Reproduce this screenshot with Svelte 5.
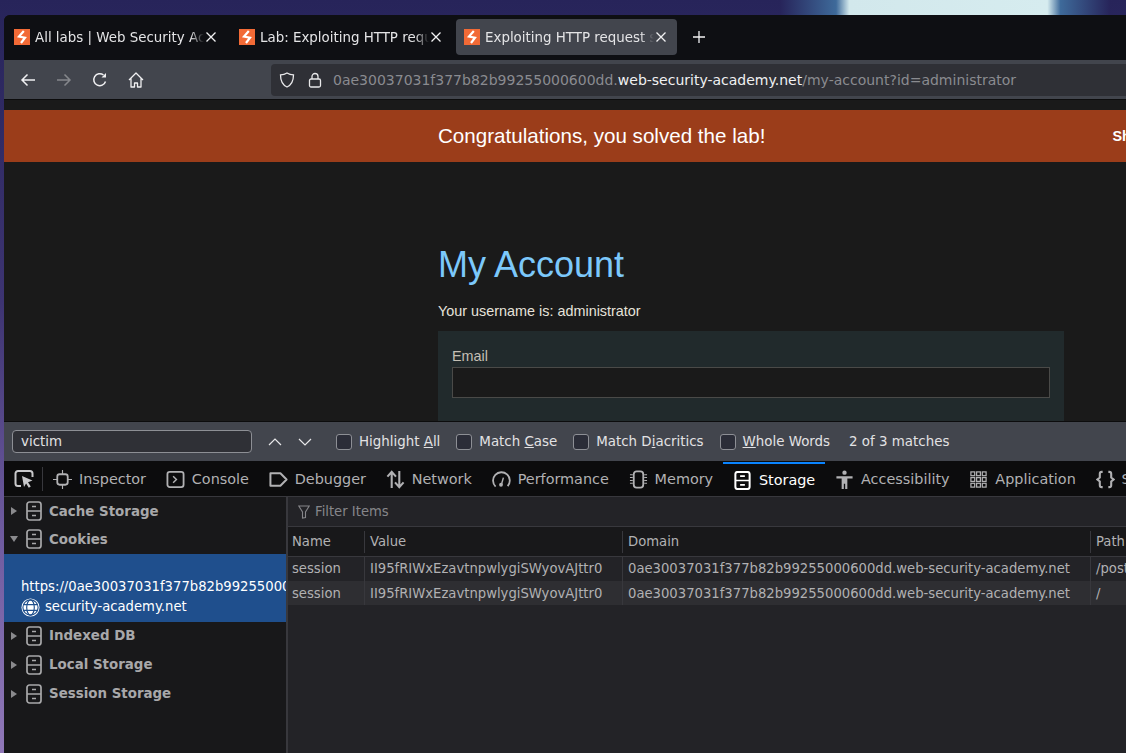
<script>
  const tabs = [
    { title: 'All labs | Web Security Academy', active: false },
    { title: 'Lab: Exploiting HTTP request smuggling', active: false },
    { title: 'Exploiting HTTP request smuggling', active: true }
  ]
  const options = [
    { before: 'Highlight ', key: 'A', after: 'll' },
    { before: 'Match ', key: 'C', after: 'ase' },
    { before: 'Match D', key: 'i', after: 'acritics' },
    { before: '', key: 'W', after: 'hole Words' }
  ]
  const tools = ['Inspector', 'Console', 'Debugger', 'Network', 'Performance', 'Memory', 'Storage', 'Accessibility', 'Application', 'Style Editor']
  const cookies = [
    { path: '/post' },
    { path: '/' }
  ]
  const value = 'II95fRIWxEzavtnpwlygiSWyovAJttr0'
  const domain = '0ae30037031f377b82b99255000600dd.web-security-academy.net'
</script>

{#snippet favicon()}
  <svg class="favicon" viewBox="0 0 16 16">
    <rect width="16" height="16" fill="#f26a36" />
    <path d="M9.800 2 5 7.500l6 1.200L7 14" fill="none" stroke="#fff" stroke-width="2.200" />
  </svg>
{/snippet}

{#snippet cabinet()}
  <svg class="ico" viewBox="0 0 16 20" fill="none" stroke="currentColor" stroke-width="1.700">
    <rect x="1" y="1" width="14" height="18" rx="2.500" />
    <path d="M1 10h14M6 5.500h4M6 14.500h4" />
  </svg>
{/snippet}

{#snippet toolIcon(name)}
  <svg class="ico tool-ico" viewBox="0 0 20 20" fill="none" stroke="currentColor" stroke-width="1.900">
    {#if name === 'Inspector'}
      <rect x="4.500" y="4.500" width="11" height="11" rx="2.500" />
      <path d="M10 0v4.500M10 15.500V20M0 10h4.500M15.500 10H20" stroke-width="1.200" />
    {:else if name === 'Console'}
      <rect x="1.500" y="2" width="17" height="16" rx="2.500" />
      <path d="m7.500 6.500 3.500 3.500-3.500 3.500" stroke-width="1.500" />
    {:else if name === 'Debugger'}
      <path d="M1.500 3.500h10.500l6.500 6.500-6.500 6.500H1.500z" stroke-linejoin="round" stroke-width="2.100" />
    {:else if name === 'Network'}
      <path d="M6 19V2M1.500 7 6 2l4.500 5M14 1v17M9.500 13l4.500 5 4.500-5" stroke-width="2.200" />
    {:else if name === 'Performance'}
      <path d="M3.800 17.500A8.800 8.800 0 1 1 16.500 17" />
      <circle cx="9.500" cy="15.500" r="2" fill="currentColor" stroke="none" />
      <path d="m10 15 2-7" stroke-width="1.500" />
    {:else if name === 'Memory'}
      <rect x="5" y="1.500" width="10" height="17" rx="3" />
      <path d="M1 5h3M1 8h3M1 11h3M1 14h3M16 5h3M16 8h3M16 11h3M16 14h3" stroke-width="1.100" />
    {:else if name === 'Storage'}
      <rect x="2.500" y="1" width="15" height="18" rx="2.500" stroke-width="2.100" />
      <path d="M2.500 10h15M7.500 5.500h5M7.500 14.500h5" stroke-width="1.800" />
    {:else if name === 'Accessibility'}
      <circle cx="10" cy="2.800" r="2.300" fill="currentColor" stroke="none" />
      <path d="M1.500 6.500h17v2.500h-5.500v11h-2.300v-5.500H9.300V20H7V9H1.500z" fill="currentColor" stroke="none" />
    {:else if name === 'Application'}
      <g stroke-width="1.300">
        <rect x="2" y="2" width="4" height="4" /><rect x="8" y="2" width="4" height="4" /><rect x="14" y="2" width="4" height="4" />
        <rect x="2" y="8" width="4" height="4" /><rect x="8" y="8" width="4" height="4" /><rect x="14" y="8" width="4" height="4" />
        <rect x="2" y="14" width="4" height="4" /><rect x="8" y="14" width="4" height="4" /><rect x="14" y="14" width="4" height="4" />
      </g>
    {:else}
      <path d="M7 2H6Q4 2 4 4v4l-2.500 2L4 12v4q0 2 2 2h1M13 2h1q2 0 2 2v4l2.500 2-2.500 2v4q0 2-2 2h-1" stroke-width="2.200" />
    {/if}
  </svg>
{/snippet}

<div class="wallpaper"><div class="moon"></div></div>

<div class="window">
  <div class="tabbar">
    {#each tabs as tab}
      <div class="tab" class:active={tab.active}>
        {@render favicon()}
        <span class="tab-title">{tab.title}</span>
        <svg class="tab-close" viewBox="0 0 16 16" stroke="currentColor" stroke-width="1.300"><path d="m3.500 3.500 9 9M12.500 3.500l-9 9" /></svg>
      </div>
    {/each}
    <svg class="newtab" viewBox="0 0 12 12" stroke="currentColor" stroke-width="1.300"><path d="M6 0v12M0 6h12" /></svg>
  </div>

  <div class="toolbar">
    <svg class="nav" viewBox="0 0 16 16" fill="none" stroke="currentColor" stroke-width="1.500"><path d="M15 8H2M7.500 2.500 2 8l5.500 5.500" /></svg>
    <svg class="nav dim" viewBox="0 0 16 16" fill="none" stroke="currentColor" stroke-width="1.500"><path d="M1 8h13M8.500 2.500 14 8l-5.500 5.500" /></svg>
    <svg class="nav" viewBox="0 0 16 16" fill="none" stroke="currentColor" stroke-width="1.500"><path d="M13.500 9.500A6 6 0 1 1 11.500 3" /><path d="M14 1v4.500H9.500" fill="currentColor" stroke="none" /></svg>
    <svg class="nav" viewBox="0 0 16 16" fill="none" stroke="currentColor" stroke-width="1.300"><path d="M1 8 8 1l7 7M3 6.500V15h3.500v-4h3v4H13V6.500" stroke-linejoin="round" /></svg>
    <div class="urlbar">
      <svg class="url-ico" viewBox="0 0 16 16" fill="none" stroke="currentColor" stroke-width="1.300"><path d="M8 1c2 1.300 4 1.800 6.500 1.800 0 6-2 10.200-6.500 12.200C3.500 13 1.500 8.800 1.500 2.800 4 2.800 6 2.300 8 1z" /></svg>
      <svg class="url-ico" viewBox="0 0 16 16" fill="none" stroke="currentColor" stroke-width="1.300"><rect x="2.500" y="7" width="11" height="8" rx="1.500" /><path d="M5 7V4.500a3 3 0 0 1 6 0V7" /></svg>
      <span class="url">0ae30037031f377b82b99255000600dd.<b>web-security-academy.net</b>/my-account?id=administrator</span>
    </div>
  </div>

  <div class="page">
    <div class="banner">
      <span class="banner-text">Congratulations, you solved the lab!</span>
      <span class="share">Share your skills!</span>
    </div>
    <div class="content">
      <h1>My Account</h1>
      <p>Your username is: administrator</p>
      <div class="form">
        <label for="email">Email</label>
        <input id="email" type="text" />
      </div>
    </div>
  </div>

  <div class="findbar">
    <div class="find-input">victim</div>
    <svg class="chev" viewBox="0 0 14 8" fill="none" stroke="currentColor" stroke-width="1.200"><path d="m1 7 6-6 6 6" /></svg>
    <svg class="chev" viewBox="0 0 14 8" fill="none" stroke="currentColor" stroke-width="1.200"><path d="m1 1 6 6 6-6" /></svg>
    {#each options as opt}
      <div class="find-opt">
        <span class="check"></span>
        <span>{opt.before}<u>{opt.key}</u>{opt.after}</span>
      </div>
    {/each}
    <span class="matches">2 of 3 matches</span>
  </div>

  <div class="devtabs">
    <svg class="picker" viewBox="0 0 20 20" fill="none" stroke="currentColor" stroke-width="2">
      <path d="M7 17H4a2.500 2.500 0 0 1-2.500-2.500v-10A2.500 2.500 0 0 1 4 2h12a2.500 2.500 0 0 1 2.500 2.500V8" />
      <path d="m8 7 10.500 4.500-4.500 1.800 2.800 4.200-2 1.300-2.700-4.300L10 18z" fill="currentColor" stroke="none" />
    </svg>
    <span class="sep"></span>
    {#each tools as tool}
      <div class="devtab" class:selected={tool === 'Storage'}>
        {@render toolIcon(tool)}
        <span>{tool}</span>
      </div>
    {/each}
  </div>

  <div class="panels">
    <div class="tree">
      <div class="tree-row"><span class="arrow"></span>{@render cabinet()}<b>Cache Storage</b></div>
      <div class="tree-row"><span class="arrow open"></span>{@render cabinet()}<b>Cookies</b></div>
      <div class="host">
        <span class="host-line">https://0ae30037031f377b82b99255000600dd.web-</span>
        <span class="host-line host-second">
          <svg class="globe" viewBox="0 0 20 20" fill="none" stroke="#1f4f8d" stroke-width="1.200">
            <circle cx="10" cy="10" r="9.500" fill="#fff" stroke="none" />
            <ellipse cx="10" cy="10" rx="4" ry="8" />
            <circle cx="10" cy="10" r="8" />
            <path d="M2.500 7h15M2.500 13h15" />
          </svg>
          security-academy.net
        </span>
      </div>
      <div class="tree-row"><span class="arrow"></span>{@render cabinet()}<b>Indexed DB</b></div>
      <div class="tree-row"><span class="arrow"></span>{@render cabinet()}<b>Local Storage</b></div>
      <div class="tree-row"><span class="arrow"></span>{@render cabinet()}<b>Session Storage</b></div>
    </div>

    <div class="table-side">
      <div class="filter">
        <svg class="funnel" viewBox="0 0 12 14" fill="none" stroke="currentColor" stroke-width="1.100"><path d="M.8 1h10.400L7.500 7v5.500L4.500 13V7z" /></svg>
        Filter Items
      </div>
      <div class="row head">
        <span>Name</span><span>Value</span><span>Domain</span><span>Path</span>
      </div>
      {#each cookies as cookie}
        <div class="row">
          <span>session</span><span>{value}</span><span>{domain}</span><span>{cookie.path}</span>
        </div>
      {/each}
    </div>
  </div>
</div>

<style>
  :global(body) {
    background: #27245a;
    overflow: hidden;
    font-family: "DejaVu Sans", sans-serif;
  }
  .wallpaper {
    position: absolute;
    inset: 0;
    overflow: hidden;
    background: linear-gradient(180deg, #27245a 0%, #3d3472 40%, #6d5a9e 70%, #9078b8 100%);
  }
  .moon {
    position: absolute;
    left: 780px;
    top: 0;
    width: 330px;
    height: 15px;
    background: linear-gradient(90deg, #27245a 0%, #3e6a9a 17%, #d2e8ec 21%, #d6ecef 81%, #3e6a9a 85%, #27245a 100%);
  }
  .window {
    position: relative;
    margin: 15px 0 0 4px;
    width: 1122px;
    height: 738px;
    display: flex;
    flex-direction: column;
    overflow: hidden;
    border-radius: 6px 0 0 0;
    background: #18181a;
  }
  .tabbar {
    height: 45px;
    flex: none;
    background: #0e0f13;
    display: flex;
    align-items: center;
    gap: 4px;
    padding: 0 0 1px 2px;
    box-sizing: border-box;
  }
  .tab {
    width: 221px;
    height: 36px;
    flex: none;
    box-sizing: border-box;
    padding: 0 8px;
    display: flex;
    align-items: center;
    gap: 5px;
    border-radius: 4px;
    color: #e4e4e6;
    font-size: 13.4px;
  }
  .tab.active {
    background: #42454d;
  }
  .favicon {
    width: 16px;
    height: 16px;
    flex: none;
  }
  .tab-title {
    flex: 1;
    min-width: 0;
    white-space: nowrap;
    overflow: hidden;
    -webkit-mask-image: linear-gradient(90deg, #000 92%, transparent 100%);
    mask-image: linear-gradient(90deg, #000 92%, transparent 100%);
  }
  .tab-close {
    width: 16px;
    height: 16px;
    flex: none;
    margin-left: -6px;
    color: #f2f2f4;
  }
  .newtab {
    width: 12px;
    height: 12px;
    margin-left: 12px;
    color: #f2f2f4;
  }
  .toolbar {
    height: 40px;
    flex: none;
    box-sizing: border-box;
    background: #42454d;
    border-bottom: 1px solid #0c0c0d;
    display: flex;
    align-items: center;
    padding-left: 16px;
    color: #f0f0f2;
  }
  .nav {
    width: 16px;
    height: 16px;
    margin-right: 20px;
    flex: none;
  }
  .nav.dim {
    color: #85878c;
  }
  .urlbar {
    margin-left: 107px;
    flex: none;
    width: 900px;
    height: 32px;
    border-radius: 4px 0 0 4px;
    background: #2f3036;
    display: flex;
    align-items: center;
    padding-left: 8px;
    gap: 12px;
  }
  .url-ico {
    width: 16px;
    height: 16px;
    flex: none;
    color: #e8e8ea;
  }
  .url {
    font-size: 14px;
    margin-left: -2px;
    color: #8a8b90;
    white-space: nowrap;
  }
  .url b {
    font-weight: 400;
    color: #f0f0f2;
  }
  .page {
    height: 322px;
    flex: none;
    overflow: hidden;
    background: #1a1a1a;
    padding-top: 10px;
    box-sizing: border-box;
    font-family: "Liberation Sans", Arial, sans-serif;
    border-bottom: 1px solid #0c0c0d;
  }
  .banner {
    height: 52px;
    box-sizing: border-box;
    background: #9b3d1a;
    color: #fff;
    display: flex;
    align-items: center;
    padding: 0 0 1px 434px;
    white-space: nowrap;
  }
  .banner-text {
    font-size: 20.6px;
  }
  .share {
    margin-left: 347px;
    font-size: 14.4px;
    font-weight: 700;
  }
  .content {
    margin-left: 434px;
    width: 626px;
  }
  h1 {
    margin: 82px 0 0;
    font-size: 36px;
    line-height: 42px;
    font-weight: 400;
    color: #7cc8fb;
  }
  p {
    margin: 16px 0 0;
    font-size: 14.4px;
    line-height: 18px;
    color: #e6e2da;
  }
  .form {
    margin-top: 11px;
    background: #212a2c;
    padding: 16px 14px 40px;
    height: 120px;
    box-sizing: border-box;
  }
  label {
    display: block;
    font-size: 14.4px;
    line-height: 18px;
    margin-bottom: 2px;
    color: #c4bfb4;
  }
  input {
    display: block;
    width: 100%;
    height: 31px;
    box-sizing: border-box;
    background: #1a1a1a;
    border: 1px solid #4a4a48;
  }
  .findbar {
    height: 40px;
    flex: none;
    box-sizing: border-box;
    background: #42454d;
    border-bottom: 1px solid #0c0c0d;
    display: flex;
    align-items: center;
    padding-left: 8px;
    font-size: 13.4px;
    color: #e2e2e4;
    white-space: nowrap;
  }
  .find-input {
    width: 240px;
    height: 23px;
    box-sizing: border-box;
    border: 1px solid #8d8f95;
    border-radius: 4px;
    background: #2f3036;
    padding-left: 8px;
    line-height: 21px;
    margin-right: 16px;
  }
  .chev {
    width: 14px;
    height: 8px;
    margin-right: 16px;
    color: #e8e8ea;
  }
  .chev + .chev {
    margin-right: 24px;
  }
  .find-opt {
    display: flex;
    align-items: center;
    gap: 7px;
    margin-right: 16px;
  }
  .check {
    width: 16px;
    height: 16px;
    box-sizing: border-box;
    border: 1px solid #8d8f95;
    border-radius: 3px;
    background: #2b2d38;
  }
  .matches {
    margin-left: 3px;
  }
  .devtabs {
    height: 35px;
    flex: none;
    box-sizing: border-box;
    background: #0c0c0d;
    border-bottom: 1px solid #38383d;
    display: flex;
    align-items: center;
    color: #b1b1b3;
    font-size: 14.4px;
    white-space: nowrap;
  }
  .picker {
    width: 20px;
    height: 20px;
    margin-left: 10px;
    flex: none;
    color: #c8c8ca;
  }
  .sep {
    width: 1px;
    height: 24px;
    background: #38383d;
    margin: 0 0 0 8px;
    flex: none;
  }
  .devtab {
    height: 100%;
    box-sizing: border-box;
    display: flex;
    align-items: center;
    gap: 7px;
    padding: 0 9.900px;
    flex: none;
  }
  .devtab.selected {
    color: #fff;
    border-top: 2px solid #0a84ff;
  }
  .ico {
    width: 16px;
    height: 20px;
    flex: none;
  }
  .tool-ico {
    width: 19px;
    height: 19px;
  }
  .panels {
    flex: 1;
    min-height: 0;
    display: flex;
  }
  .tree {
    width: 282px;
    flex: none;
    background: #18181a;
    color: #a8a8aa;
    font-size: 13.4px;
    border-right: 2px solid #38383d;
    overflow: hidden;
  }
  .tree-row {
    height: 29px;
    display: flex;
    align-items: center;
    padding-left: 7px;
    gap: 7px;
  }
  .tree-row:nth-child(-n + 2) {
    height: 28px;
  }
  .tree-row .arrow {
    width: 0;
    height: 0;
    border-left: 6px solid #8a8a8d;
    border-top: 4.500px solid transparent;
    border-bottom: 4.500px solid transparent;
    margin-right: 2px;
  }
  .tree-row .arrow.open {
    width: 0;
    border-top: 6px solid #8a8a8d;
    border-left: 4.500px solid transparent;
    border-right: 4.500px solid transparent;
    border-bottom: 0;
    margin-left: -1px;
    margin-right: 1px;
  }
  .host {
    height: 68px;
    margin-top: 1px;
    box-sizing: border-box;
    background: #1f4f8d;
    color: #fff;
    padding: 23px 0 0 17px;
    white-space: nowrap;
    overflow: hidden;
    font-size: 13.2px;
  }
  .host-line {
    display: block;
    line-height: 20px;
  }
  .host-second {
    display: flex;
    align-items: center;
    gap: 5px;
  }
  .globe {
    width: 19px;
    height: 19px;
  }
  .host + .tree-row {
    margin-top: -1px;
  }
  .table-side {
    flex: 1;
    min-width: 0;
    background: #232327;
    color: #b1b1b3;
    font-size: 13.2px;
    overflow: hidden;
  }
  .filter {
    height: 30px;
    box-sizing: border-box;
    border-bottom: 1px solid #38383d;
    display: flex;
    align-items: center;
    gap: 5px;
    padding-left: 10px;
    color: #86868a;
  }
  .funnel {
    width: 12px;
    height: 14px;
  }
  .row {
    display: grid;
    grid-template-columns: 77px 258px 468px 200px;
    height: 24px;
    align-items: center;
    white-space: nowrap;
  }
  .row span {
    padding-left: 5px;
    border-right: 1px solid #38383d;
    line-height: 24px;
    height: 100%;
    overflow: hidden;
  }
  .row span:first-child {
    padding-left: 4px;
  }
  .row.head {
    height: 30px;
    background: #18181a;
    border-bottom: 1px solid #38383d;
    box-sizing: border-box;
  }
  .row.head span {
    height: 22px;
    line-height: 22px;
  }
  .row:nth-child(4) {
    background: #2e2e32;
  }
  .row:nth-child(4) span {
    line-height: 25px;
  }
</style>
